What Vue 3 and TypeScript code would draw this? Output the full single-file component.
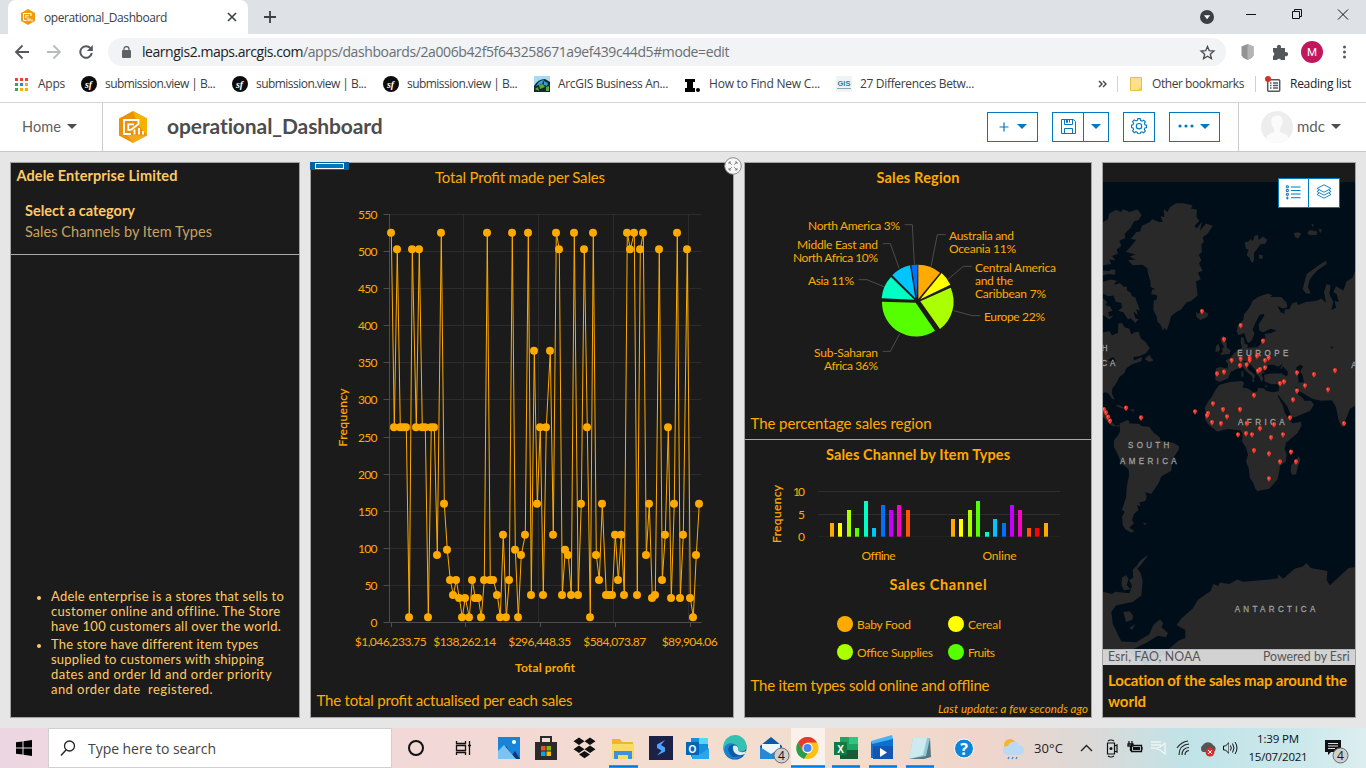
<script setup lang="ts">
interface Mark { icon: string; label: string; w: number }
interface Bar { x: number; v: number; c: string }
interface Slice { d: string; c: string }
interface Label { x: number; y: number; w: number; t: string; end?: boolean }

// Spreads a text over a given width by adjusting its tracking.
const vFit = {
  mounted(el: HTMLElement, binding: { value: number }) {
    const range = document.createRange()
    range.selectNodeContents(el)
    const width = range.getBoundingClientRect().width
    const count = (el.textContent || '').trim().length
    if (count > 0) el.style.letterSpacing = ((binding.value - width) / count).toFixed(3) + 'px'
  },
}

const marks: Mark[] = [
  { icon: 'sf', label: 'submission.view | B...', w: 110 },
  { icon: 'sf', label: 'submission.view | B...', w: 110 },
  { icon: 'sf', label: 'submission.view | B...', w: 110 },
  { icon: 'arc', label: 'ArcGIS Business An...', w: 110 },
  { icon: 'i', label: 'How to Find New C...', w: 111 },
  { icon: 'gis', label: '27 Differences Betw...', w: 114 },
]

const profit: number[] = [
  525, 263, 503, 263, 263, 263, 7, 503, 263, 503, 263, 263, 7, 263, 263, 91, 525,
  160, 98, 57, 37, 57, 33, 7, 33, 7, 57, 33, 33, 7, 57, 525, 57, 57, 37, 7, 118, 7, 57, 525, 98, 7, 91, 118,
  525, 37, 366, 160, 263, 37, 263, 366, 118, 525, 503, 37, 98, 91, 37, 525, 37, 160, 503, 263,
  7, 525, 91, 57, 160, 37, 37, 37, 118, 57, 118, 37, 525, 503, 525, 37, 503, 525, 91, 160,
  33, 37, 503, 57, 118, 263, 33, 160, 525, 33, 118, 503, 33, 7, 91, 160,
]
const points = profit.map((v, i) => ({ x: Math.round(390.7 + i * 3.114), y: Math.round((622.4 - v * 0.742) * 10) / 10 }))
const line = points.map((p) => `${p.x + 0.3},${p.y}`).join(' ')
const yTicks = Array.from({ length: 12 }, (_, i) => ({ v: i * 50, y: Math.round(622 - i * 37.1) + 0.5 }))
const xTicks = [
  { x: 391.5, t: '$1,046,233.75', w: 72 },
  { x: 465.5, t: '$138,262.14', w: 63 },
  { x: 540.5, t: '$296,448.35', w: 63 },
  { x: 615.5, t: '$584,073.87', w: 63 },
  { x: 690.5, t: '$89,904.06', w: 56 },
]

const slices: Slice[] = [
  { d: 'M535 432V329A103 103 0 0 1 600 353Z', c: '#ffaa00' },
  { d: 'M541 433L605 354A103 103 0 0 1 631 389Z', c: '#ffff00' },
  { d: 'M541 439L632 398A103 103 0 0 1 600 522Z', c: '#aaff00' },
  { d: 'M527 443L585 527A102 102 0 0 1 426 440Z', c: '#55ff00' },
  { d: 'M523 434L425 430A103 103 0 0 1 453 366Z', c: '#00ffc5' },
  { d: 'M526 430L457 361A103 103 0 0 1 510 331Z', c: '#00c5ff' },
  { d: 'M530 430L514 330A103 103 0 0 1 533 329Z', c: '#0070ff' },
]
const leaders = [
  '494,209 517,209 523,328', '428,266 451,266 477,339', '356,374 381,374 432,395',
  '617,239 592,239 573,335', '695,334 670,334 624,373', '721,482 697,482 641,467', '428,589 451,589 479,537',
]
const pieLabels: Label[] = [
  { x: 900, y: 230, w: 92, t: 'North America 3%', end: true },
  { x: 878, y: 249, w: 81, t: 'Middle East and', end: true },
  { x: 878, y: 262, w: 85, t: 'North Africa 10%', end: true },
  { x: 854, y: 285, w: 46, t: 'Asia 11%', end: true },
  { x: 949, y: 240, w: 65, t: 'Australia and' },
  { x: 949, y: 253, w: 67, t: 'Oceania 11%' },
  { x: 975, y: 272, w: 81, t: 'Central America' },
  { x: 975, y: 285, w: 38, t: 'and the' },
  { x: 975, y: 298, w: 71, t: 'Caribbean 7%' },
  { x: 984, y: 321, w: 61, t: 'Europe 22%' },
  { x: 878, y: 357, w: 64, t: 'Sub-Saharan', end: true },
  { x: 878, y: 370, w: 54, t: 'Africa 36%', end: true },
]

const hues = ['#ffaa00', '#ffff00', '#aaff00', '#55ff00', '#00ffc5', '#00c5ff', '#0070ff', '#c500ff', '#ff00c5', '#ff5500', '#ff0000', '#ffaa00']
const group = (xs: number[], vs: number[]): Bar[] => xs.map((x, i) => ({ x, v: vs[i], c: hues[i] }))
const bars: Bar[] = [
  ...group([830, 838, 847, 855, 864, 872, 881, 889, 897, 906], [3, 3, 6, 2, 8, 2, 7, 6, 7, 6]),
  ...group([951, 959, 968, 976, 985, 993, 1002, 1010, 1018, 1027, 1035, 1044], [4, 4, 6, 8, 1, 4, 3, 7, 6, 2, 2, 3]),
]
const legend = [
  { t: 'Baby Food', c: '#ffaa00', w: 54 }, { t: 'Cereal', c: '#ffff00', w: 33 },
  { t: 'Office Supplies', c: '#aaff00', w: 76 }, { t: 'Fruits', c: '#55ff00', w: 27 },
]

const land = [
  // Greenland
  '90,268 106,252 120,235 105,233 120,214 132,212 138,196 162,186 168,178 190,186 200,186 194,170 205,172 203,150 215,158 222,144 240,134 262,134 290,140 285,148 303,152 301,172 310,182 296,196 302,204 318,184 312,210 330,190 350,196 335,218 320,228 324,240 316,248 318,270 308,276 316,292 309,300 320,322 306,326 314,345 300,350 303,372 305,390 285,405 270,410 256,428 240,436 225,447 220,466 212,487 206,480 201,486 193,470 184,462 182,447 172,430 173,404 183,400 182,388 166,386 168,374 178,372 164,366 163,350 156,328 154,314 140,304 110,306 96,292 120,290 100,282 118,276',
  // Arctic Canada
  '21,186 36,178 40,162 60,152 74,158 82,150 100,158 124,151 137,166 128,180 114,184 104,202 86,218 88,230 70,238 76,252 62,262 66,274 48,280 58,292 40,290 46,302 21,306',
  '21,320 40,322 46,317 58,319 57,332 36,330 21,334',
  '21,352 44,345 62,349 54,360 72,356 84,366 92,364 93,376 104,382 108,392 118,395 132,432 120,428 126,444 112,434 118,452 128,456 118,466 104,452 96,456 82,436 66,432 78,424 76,410 60,408 52,390 36,392 21,384',
  '21,398 34,408 28,416 42,420 50,432 36,436 40,448 52,446 40,456 21,444',
  '21,492 40,488 48,500 66,494 67,468 78,465 86,478 100,482 106,498 114,492 128,490 134,508 150,520 161,536 150,550 130,558 112,560 114,570 138,560 136,572 118,578 106,582 90,592 86,604 70,616 62,632 49,648 48,662 56,678 48,676 38,662 28,658 21,660',
  '146,566 160,554 172,570 160,574', '57,694 70,694 86,702 95,706 74,702', '100,706 116,706 112,712',
  '21,700 30,706 34,722 46,740 60,752 72,748 68,754 48,752 34,740 21,726',
  // South America
  '71,744 84,740 92,735 100,738 98,744 130,746 136,752 160,754 172,770 190,782 194,792 212,796 232,798 249,808 248,818 232,840 228,858 226,876 210,884 196,892 188,910 175,928 166,940 148,936 152,948 148,960 130,964 134,974 122,972 128,984 114,996 108,1014 114,1022 100,1034 116,1044 104,1047 88,1038 80,1026 78,1004 86,990 78,984 90,950 92,922 99,890 98,872 76,856 66,832 54,810 54,792 64,780 72,768', '140,1020 152,1022 148,1027',
  // Africa and Madagascar
  '370,638 385,634 402,630 437,627 444,632 440,645 456,648 472,658 484,656 486,646 504,648 512,655 530,658 548,655 550,664 545,668 560,694 566,714 582,738 590,744 616,740 616,752 604,772 570,798 566,816 572,830 570,850 552,862 549,882 544,900 520,926 498,930 484,932 478,926 472,910 462,896 458,870 450,850 456,832 450,812 438,794 440,775 434,764 414,762 400,760 382,762 364,768 348,756 336,746 326,732 330,716 326,702 336,684 348,670 358,652',
  '586,860 596,852 608,835 613,846 606,862 600,886 588,888 584,876',
  // Europe and Asia
  '360,592 372,588 394,592 396,580 388,570 402,564 414,550 428,540 438,535 434,520 435,504 444,508 446,524 456,526 454,535 484,533 494,524 496,512 508,508 506,496 526,494 542,487 524,482 500,492 490,486 488,470 505,446 504,440 490,444 478,466 470,484 476,496 466,516 456,522 450,510 445,494 428,500 422,490 425,474 442,458 444,442 460,424 470,404 486,394 516,384 530,390 522,394 556,394 572,410 574,422 560,426 544,418 554,436 566,440 566,428 580,428 588,412 602,408 606,416 630,408 662,404 676,398 690,410 684,380 692,358 704,362 700,386 712,408 706,430 720,424 716,404 728,408 722,386 712,380 720,364 742,376 752,350 770,340 777,322 777,696 762,704 752,728 738,756 728,736 720,700 708,680 676,682 648,676 634,668 612,656 604,646 598,642 606,664 622,676 624,682 644,682 654,692 642,710 616,720 594,728 586,726 574,698 552,672 546,664 550,640 546,636 526,636 506,628 504,610 528,604 552,604 576,612 572,602 552,592 560,580 544,588 552,594 538,600 528,590 514,594 508,602 496,608 502,620 496,630 490,616 482,608 478,596 460,578 450,582 458,596 472,606 478,612 472,624 466,612 450,600 440,588 420,594 404,602 396,620 370,630 358,624 358,608',
  '556,672 570,674 564,664',
  // Islands
  '372,555 380,546 378,538 384,532 376,520 374,508 384,500 384,514 392,520 392,534 404,542 400,552', '358,546 360,530 368,524 372,538 368,546',
  '300,434 306,440 322,432 338,440 332,450 314,458 302,450', '466,622 476,624 472,632', '504,640 516,640 512,645', '436,600 442,600 442,616 436,614',
  '446,242 458,240 464,232 470,240 476,224 486,222 488,236 500,226 514,234 508,246 492,248 484,260 474,272 474,292 468,300 460,284 452,278 458,262 450,260', '488,276 500,278 500,288 490,288',
  '594,216 606,214 616,218 606,232 596,226', '634,214 642,208 664,212 662,222 638,222', '646,192 654,192 650,200', '666,206 678,206 674,216',
  '620,372 626,350 632,330 650,318 668,306 690,293 692,302 664,320 648,336 640,348 636,366 644,384 630,384',
  // Antarctica
  '21,1212 48,1218 58,1212 100,1216 108,1196 100,1180 112,1172 110,1150 122,1140 132,1126 156,1109 152,1116 136,1136 124,1148 134,1160 140,1184 136,1222 110,1240 60,1250 46,1268 50,1300 76,1350 120,1352 160,1330 172,1304 192,1288 202,1300 196,1310 216,1326 210,1338 186,1334 150,1354 110,1372 21,1372',
  '78,1172 90,1166 98,1176 92,1194 104,1204 84,1208 76,1192', '82,1268 100,1266 112,1278 108,1290 90,1296', '100,1312 118,1302 108,1318',
  '242,1304 256,1286 290,1258 306,1234 344,1210 352,1190 366,1196 372,1186 400,1190 424,1178 440,1184 520,1178 546,1174 546,1164 562,1176 596,1148 620,1142 632,1132 644,1146 694,1154 692,1180 702,1194 734,1166 758,1146 777,1144 777,1372 216,1372 250,1346 268,1340 268,1318',
]
const seas = [
  '554,596 560,586 576,602 572,614 560,608', '600,590 612,582 622,586 612,600 620,612 624,630 608,632 606,610',
  '500,600 512,592 516,582 532,582 548,588 562,604 548,606 518,606', '566,600 570,612 574,600',
  '36,568 52,560 60,572 50,578', '440,572 452,578 448,570', '704,536 706,530 712,536',
]
const pinList = '318,434 434,473 384,512 501,516 363,607 384,602 407,570 434,566 432,584 452,582 461,564 461,570 483,558 507,570 518,563 507,590 492,595 486,599 552,634 564,629 603,604 654,609 717,598 627,640 603,654 591,679 696,651 744,745 474,667 351,690 381,706 432,706 393,726 336,717 333,723 348,742 375,745 297,712 452,745 492,759 534,748 582,729 426,776 450,773 468,776 525,784 561,776 474,820 519,829 585,824 600,851 552,851 519,898 90,702 135,729 24,706 30,715 36,727 42,738'
const pins = pinList.split(' ').map((s) => s.split(',').map(Number))
</script>

<template>
  <div class="screen">
    <div class="tabs">
      <div class="tab">
        <svg class="hex16" viewBox="0 0 28 32"><path d="M14 0 28 8V24L14 32 0 24V8Z" fill="#f09b0c" /><path d="M5 23V9h15v5M5 23h6M9.500 18.500v-5h6" fill="none" stroke="#fff" stroke-width="2.200" /><path d="M14 17v7M18 19v5M22 21v4" stroke="#fff" stroke-width="2.200" /></svg>
        <span v-fit="123">operational_Dashboard</span>
        <svg class="x" viewBox="0 0 10 10"><path d="M1 1 9 9M9 1 1 9" stroke="#3c4043" stroke-width="1.6" /></svg>
      </div>
      <svg class="newtab" viewBox="0 0 12 12"><path d="M6 0V12M0 6H12" stroke="#3c4043" stroke-width="1.8" /></svg>
      <svg class="winbtns" viewBox="1195 0 171 34">
        <circle cx="1207" cy="17" r="7" fill="#3c4043" /><path d="M1204 15.3h6.2l-3.1 4z" fill="#fff" />
        <path d="M1246 14.5h10M1292.500 11.500h7v7h-7zM1294.500 11v-1.500h7v7h-1.500M1338 9.500l10 10M1348 9.500l-10 10" fill="none" stroke="#111" />
      </svg>
    </div>
    <div class="toolbar">
      <svg class="nav" viewBox="0 34 108 36">
        <path d="M29 52H16.500M22.500 45.500 16 52l6.500 6.500" fill="none" stroke="#54585d" stroke-width="1.8" />
        <path d="M47 52H59.500M53.500 45.500 60 52l-6.500 6.500" fill="none" stroke="#b9bbbe" stroke-width="1.8" />
        <path d="M90.500 48.200A5.800 5.800 0 1 0 91.800 53" fill="none" stroke="#54585d" stroke-width="2" /><path d="M92.800 45v6h-6z" fill="#54585d" />
      </svg>
      <div class="omni">
        <svg class="lock" viewBox="0 0 9 12"><rect y="4" width="9" height="8" rx="1" fill="#5f6368" /><path d="M2 4.500V3a2.500 2.500 0 0 1 5 0v1.500" fill="none" stroke="#5f6368" stroke-width="1.3" /></svg>
        <span v-fit="161" class="host">learngis2.maps.arcgis.com</span><span v-fit="426" class="path">/apps/dashboards/2a006b42f5f643258671a9ef439c44d5#mode=edit</span>
        <svg class="star" viewBox="0 0 24 24"><path d="M12 3.500l2.500 6 6.500.5-5 4.300 1.500 6.400-5.500-3.500-5.500 3.500 1.500-6.400-5-4.300 6.500-.5z" fill="none" stroke="#4a4d51" stroke-width="1.900" /></svg>
      </div>
      <svg class="exts" viewBox="1226 34 140 36">
        <path d="M1247.500 44l6 2.500v9l-2 2.500-4 2-4-2-2-2.500v-9z" fill="#939393" /><path d="M1247.500 44v16l4-2 2-2.500v-9z" fill="#b4b4b4" />
        <path d="M1273 48h4.200a2.100 2.100 0 1 1 3.600 0h4.200v4.300a2.100 2.100 0 1 1 0 3.700v4h-4a2.200 2.200 0 0 0-4 0h-4v-4a2.200 2.200 0 0 0 0-4z" fill="#54585d" />
        <circle cx="1312" cy="52" r="11" fill="#c2185b" /><text x="1312" y="56.300" text-anchor="middle" class="avm">M</text>
        <g fill="#54585d"><circle cx="1344.500" cy="47" r="1.500" /><circle cx="1344.500" cy="52" r="1.500" /><circle cx="1344.500" cy="57" r="1.500" /></g>
      </svg>
    </div>
    <div class="bookmarks">
      <svg class="apps" viewBox="0 0 13 13">
        <path d="M0 0h3v3H0zM5 0h3v3H5zM10 0h3v3h-3z" fill="#ea4335" /><path d="M0 5h3v3H0zM0 10h3v3H0z" fill="#34a853" /><path d="M5 5h3v3H5z" fill="#2f7ff0" /><path d="M10 5h3v3h-3zM5 10h3v3H5zM10 10h3v3h-3z" fill="#fbab05" />
      </svg>
      <span v-fit="27" class="appst">Apps</span>
      <div v-for="(m, i) in marks" :key="i" class="mark">
        <svg viewBox="0 0 16 16">
          <template v-if="m.icon === 'sf'"><circle cx="8" cy="8" r="8" fill="#0b0b0b" /><text x="7.500" y="11.500" text-anchor="middle" class="sf">sf</text></template>
          <template v-else-if="m.icon === 'arc'"><rect width="16" height="16" fill="#a9d8f3" /><path d="M0 10Q4 3 11 3l5 3v10H0z" fill="#102b2c" /><path d="M2 10q3-6 8-6l-2 4zM10 5l4 2-1 3-3-1z" fill="#2f9fd8" /><path d="M5 9l4-1 2 3-5 2zM12 11l3-1v5h-3zM1 13l3-2 1 4z" fill="#5fa53a" /></template>
          <template v-else-if="m.icon === 'i'"><path d="M0 3h10v3H8v6h2v4H0v-4h2V6H0z" fill="#000" /><circle cx="13" cy="14" r="2" fill="#000" /></template>
          <template v-else><rect width="16" height="16" fill="#eef3f5" /><text x="8" y="10" text-anchor="middle" class="gis">GIS</text><path d="M1 12.500h14" stroke="#8aa" /></template>
        </svg>
        <span v-fit="m.w">{{ m.label }}</span>
      </div>
      <svg class="more" viewBox="0 0 9 8"><path d="M1 1l3 3-3 3M5 1l3 3-3 3" fill="none" stroke="#4a4d51" stroke-width="1.500" /></svg>
      <i class="sep"></i>
      <svg class="fold" viewBox="0 0 12 14"><path d="M.5.5h11v13H.5z" fill="#ffe08a" stroke="#e6bf4a" /><path d="M8 13.500l1.500-3h2v3z" fill="#f3cc55" /></svg>
      <span v-fit="92" class="ob">Other bookmarks</span>
      <i class="sep s2"></i>
      <svg class="rl" viewBox="0 0 16 16"><rect x="2.700" y="3.700" width="12" height="11.500" rx="1" fill="#fff" stroke="#54585d" stroke-width="1.500" /><path d="M5 7h1.500M5 9.500h1.500M5 12h1.500M8 7h5M8 9.500h5M8 12h5" stroke="#54585d" stroke-width="1.300" /><circle cx="3" cy="3" r="3" fill="#d93025" /></svg>
      <span v-fit="61" class="rlt">Reading list</span>
    </div>

    <header class="head">
      <div class="home"><span v-fit="39">Home</span><i class="caret"></i></div>
      <svg class="hex32" viewBox="0 0 28 32"><path d="M14 0 28 7.500V24.500L14 32 0 24.500V7.500Z" fill="#ea9109" /><path d="M14 0 28 7.500V24.500L18 12z" fill="#f9b100" /><path d="M28 24.500 14 32 8 24z" fill="#ffc02c" opacity=".5" /><path d="M19.500 13V9H5v14h7M15 13.300H9.300v5.500H12L19.500 13" fill="none" stroke="#fff" stroke-width="1.800" /><path d="M15.500 23.500V18.500M20 23.500v-6.500M24 23.500v-3.500" fill="none" stroke="#fff" stroke-width="1.800" /></svg>
      <h1 v-fit="216">operational_Dashboard</h1>
      <div class="btns">
        <button class="b1"><svg viewBox="0 0 10 10"><path d="M5 .5v9M.5 5h9" stroke="#0079c1" stroke-width="1.200" /></svg><i class="caret"></i></button>
        <button class="b2">
          <span class="cell"><svg viewBox="0 0 15 15"><path d="M.5.500h12l2 2v12h-14zM3.500.500v5h8v-5M5.500.500v3h1v-3M3.500 14.500v-5h8v5M8.500 1v2.500" fill="none" stroke="#0079c1" /></svg></span>
          <span class="cell c2"><i class="caret"></i></span>
        </button>
        <button class="b3"><svg viewBox="0 0 16 16"><path d="M6.800.600h2.400l.4 1.900 1.500.6 1.600-1 1.700 1.700-1 1.600.6 1.500 1.500.3v2.400l-1.600.4-.6 1.500 1 1.600-1.700 1.700-1.600-1-1.500.6-.3 1.500H6.800l-.4-1.600-1.500-.6-1.600 1-1.700-1.700 1-1.600-.6-1.500L.5 9.500V7.100l1.500-.4.600-1.500-1-1.600 1.700-1.700 1.600 1 1.500-.6z" fill="none" stroke="#0079c1" stroke-width="1.100" /><circle cx="8" cy="8.200" r="2.700" fill="none" stroke="#0079c1" stroke-width="1.100" /></svg></button>
        <button class="b1"><svg class="dots" viewBox="0 0 16 4"><circle cx="2" cy="2" r="1.600" fill="#0079c1" /><circle cx="8" cy="2" r="1.600" fill="#0079c1" /><circle cx="14" cy="2" r="1.600" fill="#0079c1" /></svg><i class="caret"></i></button>
      </div>
      <div class="user">
        <svg viewBox="0 0 32 32"><circle cx="16" cy="16" r="16" fill="#ededed" /><path d="M16 4.500c4.500 0 6 3 5.500 7-.3 3-1.500 5-2.500 6v3.500l7 3 1.500 3A16 16 0 0 1 5 27.500l1.500-3.500 6.500-3v-3.500c-1.500-1.500-2.500-3.500-2.500-6C10 7.500 11.500 4.500 16 4.500z" fill="#fbfbfb" /></svg>
        <span v-fit="28">mdc</span><i class="caret"></i>
      </div>
    </header>

    <main class="board">
      <section class="panel p1">
        <div class="cat">
          <b v-fit="161" class="co">Adele Enterprise Limited</b>
          <b v-fit="110" class="sel">Select a category</b>
          <span v-fit="187" class="sub">Sales Channels by Item Types</span>
        </div>
        <ul>
          <li><span v-fit="233">Adele enterprise is a stores that sells to</span><span v-fit="229">customer online and offline. The Store</span><span v-fit="230">have 100 customers all over the world.</span></li>
          <li><span v-fit="207">The store have different item types</span><span v-fit="213">supplied to customers with shipping</span><span v-fit="221">dates and order Id and order priority</span><span v-fit="162">and order date&nbsp; registered.</span></li>
        </ul>
      </section>

      <section class="panel p2">
        <svg class="handle" viewBox="0 0 39 8"><rect width="39" height="8" fill="#0063a0" /><rect x="5.500" y="1.500" width="28" height="5" fill="#0079c1" stroke="#fff" /></svg>
        <svg class="expand" viewBox="0 0 18 18"><circle cx="9" cy="9" r="8.300" fill="#f7f7f7" stroke="#8a8a8a" /><path d="M5 7V5h2M5 5l2.800 2.800M11 5h2v2M13 5l-2.800 2.800M5 11v2h2M5 13l2.800-2.800M13 11v2h-2M13 13l-2.800-2.800" fill="none" stroke="#777" stroke-width=".9" /></svg>
        <svg class="chart" viewBox="311 163 422 554">
          <text x="520" y="183" text-anchor="middle" textLength="170" class="t15">Total Profit made per Sales</text>
          <g stroke="#2c2c2c"><path v-for="t in yTicks" :key="t.v" :d="`M389 ${t.y}H701.500`" /><path v-for="x in [463.500, 538.500, 613.500, 688.500]" :key="x" :d="`M${x} 214V622`" /></g>
          <g stroke="#4d4d4d"><path v-for="t in yTicks" :key="t.v" :d="`M383.500 ${t.y}H389`" /><path d="M389.500 214V622.500H701.500" fill="none" /><path v-for="t in xTicks" :key="t.x" :d="`M${t.x} 622v5`" /></g>
          <polyline :points="line" fill="none" stroke="#ffaa00" stroke-width="1" />
          <circle v-for="(p, i) in points" :key="i" :cx="p.x" :cy="p.y" r="4" fill="#ffaa00" />
          <text v-for="t in yTicks" :key="t.v" x="377.500" :y="t.y + 4.500" text-anchor="end" class="t12" :textLength="t.v >= 100 ? 19.500 : t.v ? 13 : 6.500">{{ t.v }}</text>
          <text v-for="t in xTicks" :key="t.x" :x="t.x - 0.800" y="646" text-anchor="middle" class="t12" :textLength="t.w">{{ t.t }}</text>
          <text transform="translate(347 417.500) rotate(-90)" text-anchor="middle" class="t12 m" textLength="58">Frequency</text>
          <text x="545" y="672" text-anchor="middle" class="t12 b" textLength="60">Total profit</text>
          <text x="316.500" y="706" class="t15" textLength="256">The total profit actualised per each sales</text>
        </svg>
      </section>

      <section class="panel p3">
        <svg class="pie" viewBox="745 163 346 276">
          <text x="918" y="183" text-anchor="middle" class="t14 b" textLength="83">Sales Region</text>
          <g transform="translate(740 155) scale(.33333)">
            <polyline v-for="l in leaders" :key="l" :points="l" fill="none" stroke="#4c4c4c" stroke-width="3" />
            <path v-for="s in slices" :key="s.c" :d="s.d" :fill="s.c" />
          </g>
          <text v-for="l in pieLabels" :key="l.t" :x="l.x" :y="l.y" :text-anchor="l.end ? 'end' : 'start'" :textLength="l.w" class="t11">{{ l.t }}</text>
          <text x="750.500" y="429" class="t15" textLength="181">The percentage sales region</text>
        </svg>
        <svg class="bars" viewBox="745 440 346 277">
          <text x="918" y="460" text-anchor="middle" class="t14 b" textLength="184">Sales Channel by Item Types</text>
          <path d="M818 491.500h242M818 514.500h242M818 536.500h242" stroke="#2e2e2e" />
          <rect v-for="b in bars" :key="b.x" :x="b.x" :y="537 - Math.round(b.v * 4.55)" width="4" :height="Math.round(b.v * 4.55)" :fill="b.c" />
          <path d="M818 536.500h242" stroke="#000" opacity=".25" />
          <text x="805" y="496" text-anchor="end" class="t12" textLength="12">10</text><text x="805" y="519" text-anchor="end" class="t12">5</text><text x="805" y="541" text-anchor="end" class="t12">0</text>
          <text transform="translate(781 514) rotate(-90)" text-anchor="middle" class="t12 m" textLength="58">Frequency</text>
          <text x="861.500" y="560" class="t11" textLength="34">Offline</text><text x="982.500" y="560" class="t11" textLength="34">Online</text>
          <text x="938" y="590" text-anchor="middle" class="t14 b" textLength="97">Sales Channel</text>
          <g v-for="(l, i) in legend" :key="l.t" :transform="`translate(${845 + (i % 2) * 111} ${624 + Math.floor(i / 2) * 28})`"><circle r="8" :fill="l.c" /><text x="12" y="5" class="t11" :textLength="l.w">{{ l.t }}</text></g>
          <text x="750.500" y="691" class="t15" textLength="239">The item types sold online and offline</text>
          <text x="1088" y="713" text-anchor="end" class="t11 upd" textLength="150">Last update: a few seconds ago</text>
        </svg>
      </section>

      <section class="panel p4">
        <svg class="map" viewBox="21 22 756 1393" preserveAspectRatio="none">
          <rect x="21" y="20" width="756" height="56" fill="#1b1b1b" /><rect x="21" y="75" width="756" height="1342" fill="#000e1a" />
          <g fill="#292929"><polygon v-for="(p, i) in land" :key="i" :points="p" /></g>
          <g fill="#000e1a"><polygon v-for="(p, i) in seas" :key="i" :points="p" /></g>
          <g class="geo">
            <text x="424" y="557" textLength="153">EUROPE</text><text x="426" y="748" textLength="140">AFRICA</text>
            <text x="96" y="814" textLength="124">SOUTH</text><text x="72" y="856" textLength="170">AMERICA</text>
            <text x="416" y="1268" textLength="242">ANTARCTICA</text>
            <text x="17" y="543">H</text><text x="16" y="584" textLength="42">CA</text><text x="766" y="591">A</text>
          </g>
          <g v-for="(p, i) in pins" :key="i" :transform="`translate(${p[0]} ${p[1]})`"><path d="M0 9C-2 4-6 3-6-1a6 6 0 0 1 12 0c0 4-4 5-6 10z" fill="#f2392c" /><circle cx="-1.500" cy="-2" r="2" fill="#ff8274" /></g>
          <rect x="21" y="1371" width="756" height="46" fill="#d2d2d2" /><path d="M90 1371h150l-60 25-30 20z" fill="#c5ccd2" />
          <text x="36" y="1403" class="attr" textLength="278">Esri, FAO, NOAA</text><text x="501" y="1403" class="attr" textLength="260">Powered by Esri</text>
        </svg>
        <div class="tools">
          <svg viewBox="0 0 16 15"><path d="M.8.800h2v2h-2zM.8 4.500h2v2h-2zM.8 8.300h2v2h-2zM1.800 11.500v3M.5 13h2.600M5.500 2H15M5.500 5.500H15M5.500 9H15M5.500 12.700H15" fill="none" stroke="#0079c1" /></svg>
          <svg viewBox="0 0 16 15"><path d="M8 .8 15 4.500 8 8.200 1 4.500zM3 6.200 1 7.500l7 3.700 7-3.700-2-1.300M3 9.200l-2 1.300 7 3.700 7-3.700-2-1.300" fill="none" stroke="#0079c1" stroke-width=".9" /></svg>
        </div>
        <p><span v-fit="239">Location of the sales map around the</span><span v-fit="38">world</span></p>
      </section>
    </main>

    <footer class="task">
      <svg class="win" viewBox="0 0 16 16"><path d="M0 2.300 6.500 1.400V7.500H0zM7.500 1.200 16 0v7.500H7.500zM0 8.500h6.500v6.100L0 13.700zM7.500 8.500H16V16l-8.500-1.200z" fill="#000" /></svg>
      <div class="search">
        <svg viewBox="0 0 16 16"><circle cx="9.500" cy="6" r="5" fill="none" stroke="#222" stroke-width="1.300" /><path d="M6 10 1 15.500" stroke="#222" stroke-width="1.400" /></svg>
        <span v-fit="128">Type here to search</span>
      </div>
      <svg class="dock" viewBox="392 728 600 40">
        <circle cx="416" cy="748" r="7" fill="none" stroke="#111" stroke-width="2" />
        <path d="M456.500 741v2.500h9V741M456.500 755v-2.500h9v2.500M456.500 745.500h9v5h-9zM469.500 741v14M468 745.500h3" fill="none" stroke="#111" stroke-width="1.300" />
        <rect x="791" y="728" width="34" height="40" fill="#fff" opacity=".6" />
        <path d="M609 766.500h29M791 766.500h34M832 766.500h28M869 766.500h28M906 766.500h28" stroke="#0078d7" stroke-width="2.500" />
        <rect x="498" y="737" width="22" height="22" fill="#1783db" /><path d="M498 759l8-13 6 9 3-4 5 8z" fill="#0b3a75" /><path d="M498 759v-8l6-6 12 14z" fill="#79c4f4" /><circle cx="514" cy="742" r="2" fill="#fff" />
        <path d="M535 742h22v18h-22z" fill="#2b2b2b" /><path d="M541 742v-5h10v5" fill="none" stroke="#2b2b2b" stroke-width="2" /><path d="M541 746h4.500v4.500H541z" fill="#f25022" /><path d="M546.500 746h4.500v4.500h-4.500z" fill="#7fba00" /><path d="M541 751.500h4.500v4.500H541z" fill="#00a4ef" /><path d="M546.500 751.500h4.500v4.500h-4.500z" fill="#ffb900" />
        <path d="M579 737.500l5.500 3.700-5.500 3.700-5.500-3.700zM590 737.500l5.500 3.700-5.500 3.700-5.500-3.700zM579 745.500l5.500 3.700-5.500 3.700-5.500-3.700zM590 745.500l5.500 3.700-5.500 3.700-5.500-3.700zM584.500 751l5.500 3.600-5.500 3.700-5.500-3.700z" fill="#111" />
        <path d="M612 739h8l2 3h11v17h-21z" fill="#efb52c" /><path d="M612 744h22v15h-22z" fill="#ffd968" /><path d="M614 751h18v8h-4v-4h-10v4h-4z" fill="#3c93dc" />
        <rect x="649" y="736" width="24" height="24" fill="#1d2146" /><path d="M665 740l-8 4.500v3.500l4.500 2.500-4.500 5 8-4v-4l-4-2.500z" fill="#4aa3ff" />
        <path d="M691 738h17v19h-17z" fill="#1490df" /><path d="M699 738h9v6h-9z" fill="#50d9ff" /><path d="M692 749l9 5 8-6v11h-17z" fill="#28a8ea" /><rect x="686" y="742" width="13" height="13" fill="#0364b8" /><text x="692.500" y="752.500" text-anchor="middle" class="ico">O</text>
        <circle cx="735" cy="748" r="11.500" fill="#0c59a4" /><path d="M723.500 746a11.500 11.500 0 0 1 23 1c0 5-7 6-8.500 3 2-5-5-8-10-4-4 3-3 8 0 11a11 11 0 0 1-4.500-11z" fill="#35c1b1" /><path d="M733 746c4-2 6 2 5 4 2 3 6 2.500 8 1l-1 3c-6 3-13 0-12-8z" fill="#d8efec" /><path d="M724 751c0-7 6-9 10-7-7 1-8 8-1 13l9-1a11 11 0 0 1-18-5z" fill="#1b7fd4" />
        <path d="M760 746l11-9 11 9v13h-22z" fill="#0a5aa5" /><path d="M762 744h18v7l-9 5-9-5z" fill="#eef6fd" /><path d="M760 747l11 7 11-7v12h-22z" fill="#2389dc" />
        <circle cx="781.500" cy="755.500" r="7.500" fill="#cfcfcf" stroke="#6b6b6b" /><text x="781.500" y="760" text-anchor="middle" class="cnt">4</text>
        <circle cx="807.500" cy="748" r="11" fill="#fbc116" /><path d="M798 742.500a11 11 0 0 1 19 0h-9.500l-4.800 8z" fill="#e33b2e" /><path d="M798 742.500l5 8.500 4.500 2.500-3.500 5.400a11 11 0 0 1-6-16.400z" fill="#2a9d4b" /><circle cx="807.500" cy="748" r="5.200" fill="#fff" /><circle cx="807.500" cy="748" r="4" fill="#4285f4" />
        <rect x="840" y="737" width="18" height="22" fill="#21a366" /><path d="M849 737h9v7h-9z" fill="#33c481" /><path d="M840 750h18v9h-18z" fill="#185c37" /><rect x="834" y="742" width="13" height="13" fill="#107c41" /><text x="840.500" y="752.500" text-anchor="middle" class="ico">X</text>
        <path d="M871 742l22-4v20h-22z" fill="#0d6fd0" /><path d="M871 741l21-6 1 4-21 5z" fill="#48b2f2" /><path d="M873 746h20v13h-20z" fill="#1258b0" /><path d="M880 748v9l7-4.500z" fill="#fff" />
        <path d="M913 738h17l-3 20-18 1z" fill="#8fcbd6" /><path d="M913 738h14l-4 17-14 4z" fill="#cdeaf0" /><path d="M909 759l17-3 4-18 1 19-7 2z" fill="#56777f" />
        <circle cx="964" cy="748.500" r="9.500" fill="#0f85d8" stroke="#fff" /><text x="964" y="754.500" text-anchor="middle" class="q">?</text>
      </svg>
      <svg class="tray" viewBox="992 728 237 40">
        <circle cx="1010" cy="745" r="6" fill="#f8b32b" /><path d="M1007 755a4.500 4.500 0 0 1 1-9 6 6 0 0 1 11-1 5 5 0 0 1 0 10z" fill="#b9d9f4" /><path d="M1009 757l-1 2M1013 757l-1 2M1017 757l-1 2" stroke="#3a8fe0" stroke-width="1.500" />
        <text x="1034" y="753" textLength="29" class="seg">30°C</text>
        <path d="M1081 751l5.500-5.500 5.500 5.500" fill="none" stroke="#222" stroke-width="1.400" />
        <path d="M1107.500 743h7v11h-7zM1114.500 746l2.500-1v7l-2.500-1M1108 741q3-2 6 0M1108 756q3 2 6 0" fill="none" stroke="#111" stroke-width="1.200" /><circle cx="1111" cy="748.500" r="1.500" fill="#111" />
        <path d="M1131.500 745.500h10v6h-10zM1142 747v3M1129 741v3M1132 741v3M1128 744h5v2h-5zM1130.500 746v5" fill="none" stroke="#111" stroke-width="1.300" /><path d="M1133 747h7v3h-7z" fill="#111" />
        <path d="M1151 742h10M1151 745h10M1151 748h5M1157 748l3-1 5-4v11l-5-4-3-1z" fill="none" stroke="#fff" opacity=".7" stroke-width="1.300" />
        <path d="M1179 755q0-10 10-11M1182 755q0-7 7-7.500M1185 755q0-4 4-4.500M1177 748q4-6 11-7" fill="none" stroke="#222" stroke-width="1.100" />
        <path d="M1203 752a4 4 0 0 1 0-7 6 6 0 0 1 10 0 4 4 0 0 1 1 7z" fill="#555" /><circle cx="1210" cy="752" r="4.500" fill="#d92c2c" /><path d="M1208 750l4 4M1212 750l-4 4" stroke="#fff" />
        <path d="M1223.500 746h2l3.500-3.500v11l-3.500-3.500h-2z" fill="none" stroke="#111" />
      </svg>
      <svg class="tray2" viewBox="1229 728 12 40"><path d="M1230.500 745.500q1.500 2.500 0 5M1232.500 743.500q3 4.500 0 9M1235 742q4 6 0 12" fill="none" stroke="#111" /></svg>
      <div class="clock"><span v-fit="42">1:39 PM</span><span v-fit="59">15/07/2021</span></div>
      <svg class="note" viewBox="1322 728 30 40"><path d="M1325 740h16v12h-10l-3 3v-3h-3z" fill="#111" /><path d="M1328 743.500h10M1328 746h10M1328 748.500h7" stroke="#ddd" /><circle cx="1340.500" cy="755.500" r="7.500" fill="#cfcfcf" stroke="#6b6b6b" /><text x="1340.500" y="760" text-anchor="middle" class="cnt">4</text></svg>
    </footer>
  </div>
</template>

<style>
body { margin: 0; overflow: hidden; }
</style>

<style scoped>
.screen { width: 1366px; height: 768px; display: flex; flex-direction: column; background: #e6e6e6; font-family: "Open Sans", "Noto Sans", sans-serif; font-size: 12px; color: #3c4043; overflow: hidden; }
.screen * { box-sizing: border-box; }
span, b, h1 { white-space: nowrap; }
svg { display: block; flex: none; }
.tabs { height: 34px; background: #dee1e6; display: flex; align-items: center; flex: none; }
.tab { width: 240px; height: 34px; margin-left: 8px; background: #fff; border-radius: 8px 8px 0 0; display: flex; align-items: center; padding-left: 13px; }
.tab span { margin-left: 9px; width: 123px; }
.hex16 { width: 14px; height: 16px; }
.x { width: 10px; height: 10px; margin-left: 60px; }
.newtab { width: 12px; height: 12px; margin-left: 16px; }
.winbtns { width: 171px; height: 34px; margin-left: auto; }
.toolbar { height: 36px; background: #fff; display: flex; align-items: center; flex: none; }
.nav { width: 108px; height: 36px; }
.omni { width: 1118px; height: 28px; background: #f1f3f4; border-radius: 14px; display: flex; align-items: center; padding-left: 14px; font-size: 14px; line-height: 20px; }
.omni span { padding-bottom: 1px; }
.lock { width: 9px; height: 12px; margin-right: 11px; }
.host { width: 161px; color: #202124; }
.path { width: 426px; color: #6a6e73; }
.star { width: 17px; height: 17px; margin-left: auto; margin-right: 10px; }
.exts { width: 140px; height: 36px; }
.avm { font-size: 11.5px; font-family: Roboto, sans-serif; }
.bookmarks { height: 33px; padding-bottom: 4px; background: #fff; border-bottom: 1px solid #d4d6d9; display: flex; align-items: center; padding-left: 15px; flex: none; }
.bookmarks span { padding-bottom: 1px; }
.apps { width: 13px; height: 13px; }
.appst { margin-left: 10px; width: 27px; margin-right: 16px; }
.mark { width: 151px; display: flex; align-items: center; gap: 8px; flex: none; }
.mark svg { width: 16px; height: 16px; }
.sf { font: italic bold 10px "Liberation Serif", serif; }
.gis { font: bold 7.5px "Liberation Sans", sans-serif; }
.more { width: 9px; height: 8px; margin-left: 111px; }
.sep { width: 1px; height: 16px; background: #cfd1d4; margin-left: 10px; }
.fold { width: 12px; height: 14px; margin-left: 12px; }
.ob { margin-left: 10px; width: 92px; }
.s2 { margin-left: 11px; }
.rl { width: 16px; height: 16px; margin-left: 9px; }
.rlt { margin-left: 9px; color: #202124; }
.head { height: 49px; background: #fff; border-bottom: 1px solid #c9c9c9; display: flex; align-items: center; flex: none; font-family: Lato, sans-serif; color: #4c4c4c; }
.home { width: 103px; height: 48px; border-right: 1px solid #ccc; padding-left: 22px; display: flex; align-items: center; font-size: 14.5px; }
.home span, .user span { color: #5f5f5f; padding-bottom: 2px; }
.caret { width: 0; height: 0; border: 5px solid transparent; border-top-color: currentColor; border-bottom: 0; }
.home .caret { margin-left: 6px; margin-bottom: 2px; }
.hex32 { width: 28px; height: 32px; margin-left: 16px; }
h1 { margin: 0 0 0 20px; width: 216px; font-size: 21px; line-height: 26px; padding-bottom: 2px; font-weight: 700; }
.btns { margin-left: 604px; display: flex; gap: 14px; color: #0079c1; }
button { height: 30px; background: #fff; border: 1px solid #0079c1; padding: 0; display: flex; align-items: center; color: #0079c1; }
.b1 { width: 51px; justify-content: center; gap: 8px; }
.b1 svg { width: 10px; height: 10px; }
.b1 .dots { width: 16px; height: 4px; margin-left: -1px; margin-right: -2px; margin-bottom: 2px; }
.b1 .caret, .c2 .caret { margin-bottom: 1px; }
.b2 { width: 57px; }
.cell { width: 31px; height: 28px; display: flex; align-items: center; justify-content: center; }
.cell svg { width: 15px; height: 15px; margin-bottom: 1px; }
.c2 { width: 25px; border-left: 1px solid #0079c1; }
.b3 { width: 32px; justify-content: center; }
.b3 svg { width: 16px; height: 16px; margin-bottom: 2px; }
.user { margin-left: 18px; height: 48px; border-left: 1px solid #ccc; padding-left: 22px; display: flex; align-items: center; font-size: 15px; }
.user svg { width: 32px; height: 32px; }
.user span { margin-left: 4px; width: 28px; }
.user .caret { margin-left: 6px; margin-bottom: 2px; }
.board { height: 576px; padding: 10px; display: flex; gap: 10px; flex: none; font-family: Lato, sans-serif; color: #ffaa00; align-items: flex-start; }
.panel { height: 556px; background: #1b1b1b; border: 1px solid #a3a3a3; flex: none; position: relative; }
.p1 { width: 290px; display: flex; flex-direction: column; justify-content: space-between; color: #ffc966; }
.cat { height: 92px; border-bottom: 1px solid #a9a9a9; display: flex; flex-direction: column; padding: 3px 0 0 5.500px; font-size: 14.5px; line-height: 20px; }
.sel { margin: 15px 0 0 8.500px; }
.sub { margin-left: 8.500px; color: #c8a262; line-height: 21px; }
ul { margin: 0 0 17px; padding: 0 0 0 40px; font-size: 13px; line-height: 15px; }
li { margin-bottom: 3px; }
li::marker { font-size: 11px; }
li span { display: table; }
.p2 { width: 424px; }
.handle { position: absolute; left: -1px; top: -1px; width: 39px; height: 8px; }
.expand { position: absolute; right: -9px; top: -6px; width: 18px; height: 18px; }
.chart { width: 422px; height: 554px; }
svg text { fill: #ffaa00; }
.t15 { font-size: 15px; }
.t14 { font-size: 14.5px; }
.t12 { font-size: 12px; }
.t11 { font-size: 12px; }
.b { font-weight: 700; }
.m { stroke: #ffaa00; stroke-width: 0.2px; }
.upd { font-style: italic; font-size: 11.5px; }
.p3 { width: 348px; }
.pie { width: 346px; height: 276px; }
.bars { width: 346px; height: 278px; border-top: 1px solid #a9a9a9; }
.p4 { width: 254px; }
.map { width: 252px; height: 502px; }
.geo text { font: 24px "Liberation Sans", sans-serif; fill: #a2a2a2; stroke: #a2a2a2; stroke-width: 0.7px; }
.attr { font-size: 37px; }
svg .attr { fill: #555; }
.tools { position: absolute; left: 175px; top: 15px; width: 62px; height: 30px; background: #fff; border: 1px solid #0079c1; display: flex; align-items: center; }
.tools svg { width: 29px; height: 15px; margin-bottom: 2px; }
.tools svg + svg { width: 31px; border-left: 1px solid #0079c1; height: 28px; padding: 5px 0 8px; margin: 0; }
.p4 p { margin: 0; padding: 5px 0 0 5px; font-size: 15px; font-weight: 700; line-height: 21px; display: flex; flex-direction: column; align-items: flex-start; }
.task { height: 40px; display: flex; align-items: center; flex: none; background: linear-gradient(90deg, #ecd6e1 0, #f0d8dc 20%, #f2d9d5 36%, #f3ddcf 50%, #f1ddce 62%, #efd5cb 72%, #dbd9d8 80%, #c0e3e7 87%, #cbe8eb 95%, #dceef0 100%); }
.win { width: 16px; height: 16px; margin: 0 16px; }
.search { width: 344px; height: 40px; background: #fff; border: 1px solid #cfcfcf; display: flex; align-items: center; padding-left: 11px; font-size: 14px; color: #444; }
.search svg { width: 16px; height: 16px; }
.search span { margin-left: 12px; }
.dock { width: 600px; height: 40px; }
.tray { width: 237px; height: 40px; }
.tray2 { width: 12px; height: 40px; }
svg .ico { font: bold 10px "Liberation Sans", sans-serif; fill: #fff; }
svg .q { font: bold 16px "Open Sans", sans-serif; fill: #fff; }
svg .cnt { font: 12px "Open Sans", sans-serif; fill: #111; }
svg .avm, svg .sf { fill: #fff; }
svg .gis { fill: #2d7f96; }
svg .seg { font: 13px "Open Sans", sans-serif; fill: #222; }
.clock { width: 74px; display: flex; flex-direction: column; align-items: center; line-height: 18px; padding-bottom: 1px; color: #111; font-size: 11.5px; }
.note { width: 30px; height: 40px; margin-left: 7px; }
</style>
